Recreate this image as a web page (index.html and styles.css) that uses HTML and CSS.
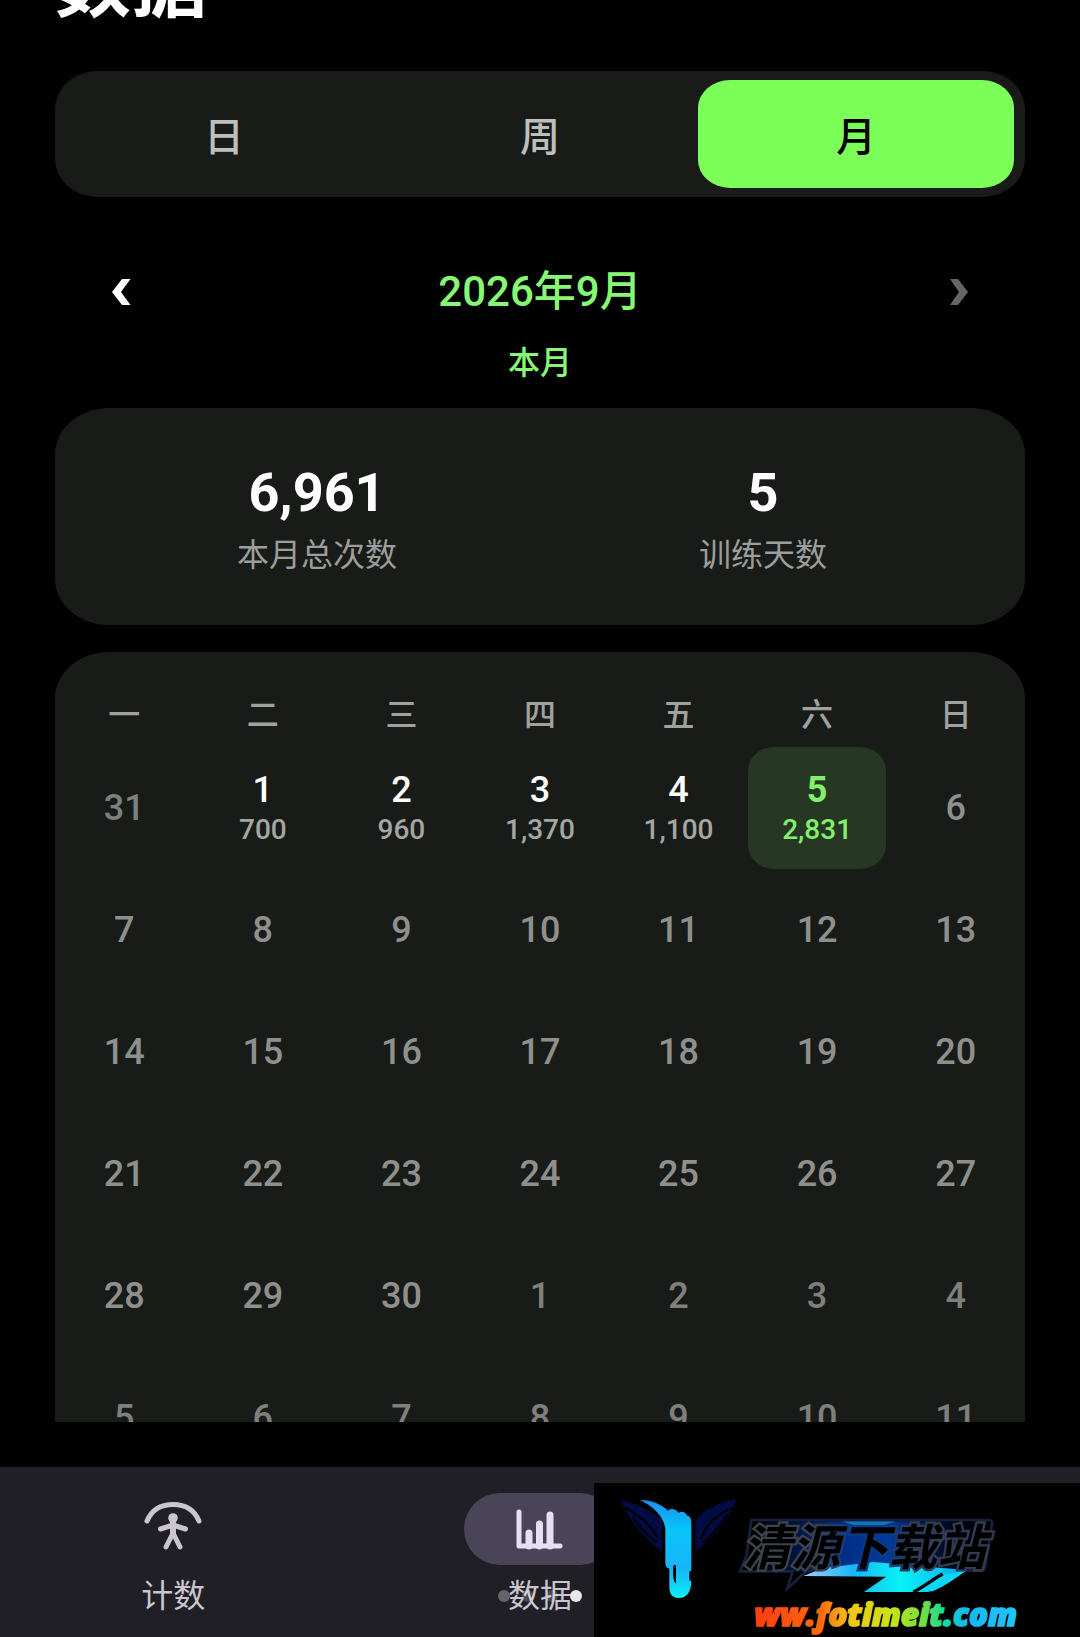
FILE: index.html
```html
<!DOCTYPE html>
<html lang="zh-CN">
<head>
  <meta charset="UTF-8" />
  <meta name="viewport" content="width=device-width, initial-scale=1.0"/>
  <title>数据</title>
  <link rel="stylesheet" href="styles.css">
</head>
<body>
  <div class="app">
    <main class="content">
      <h1>数据</h1>

      <div class="tabs">
        <button type="button">日</button>
        <button type="button">周</button>
        <button type="button" class="active">月</button>
      </div>

      <div class="month-nav">
        <button type="button" aria-label="上个月">
          <svg width="20" height="26" viewBox="0 0 20 26"><path d="M11 0h8.500L10 13l9.500 13H11L1 13z" fill="#fff"/></svg>
        </button>
        <h2>2026年9月</h2>
        <button type="button" aria-label="下个月" disabled>
          <svg width="20" height="26" viewBox="0 0 20 26"><path d="M9 0H1l9 13L1 26h8l10-13z" fill="#666"/></svg>
        </button>
      </div>
      <p class="current">本月</p>

      <section class="card stats">
        <div class="stat">
          <strong>6,961</strong>
          <span>本月总次数</span>
        </div>
        <div class="stat">
          <strong>5</strong>
          <span>训练天数</span>
        </div>
      </section>

      <section class="card calendar">
        <table>
          <thead>
            <tr><th>一</th><th>二</th><th>三</th><th>四</th><th>五</th><th>六</th><th>日</th></tr>
          </thead>
          <tbody>
            <tr>
              <td class="other">31</td>
              <td class="done"><b>1</b><small>700</small></td>
              <td class="done"><b>2</b><small>960</small></td>
              <td class="done"><b>3</b><small>1,370</small></td>
              <td class="done"><b>4</b><small>1,100</small></td>
              <td class="done today"><b>5</b><small>2,831</small></td>
              <td>6</td>
            </tr>
            <tr><td>7</td><td>8</td><td>9</td><td>10</td><td>11</td><td>12</td><td>13</td></tr>
            <tr><td>14</td><td>15</td><td>16</td><td>17</td><td>18</td><td>19</td><td>20</td></tr>
            <tr><td>21</td><td>22</td><td>23</td><td>24</td><td>25</td><td>26</td><td>27</td></tr>
            <tr><td>28</td><td>29</td><td>30</td><td class="other">1</td><td class="other">2</td><td class="other">3</td><td class="other">4</td></tr>
            <tr class="other"><td>5</td><td>6</td><td>7</td><td>8</td><td>9</td><td>10</td><td>11</td></tr>
          </tbody>
        </table>
      </section>
    </main>

    <nav class="bottom-nav">
      <a href="#count">
        <span class="icon">
          <svg width="60" height="56" viewBox="0 0 60 56" fill="none" stroke="#cac5d0" stroke-width="5" stroke-linecap="round" stroke-linejoin="round">
            <path d="M4 20C9 8 19 3.500 30 3.500S51 8 56 20"/>
            <circle cx="30" cy="17" r="4.800" fill="#cac5d0" stroke="none"/>
            <path d="M17.500 28l12.500-4 12.500 4M30 24v9M30 32l-7 14M30 32l7 14"/>
            <path d="M30 21v11" stroke-width="6"/>
          </svg>
        </span>
        <span class="label">计数</span>
      </a>
      <a href="#data" class="selected">
        <span class="icon">
          <svg width="50" height="42" viewBox="0 0 50 42" fill="none" stroke="#e8def8" stroke-linecap="round" stroke-linejoin="round">
            <path d="M4 4v34h41" stroke-width="5"/>
            <path d="M14 25v13M24.500 16v22M35 7v31" stroke-width="7"/>
          </svg>
        </span>
        <span class="label">数据
          <span class="dots"><i></i><i></i><i></i><i></i></span>
        </span>
      </a>
    </nav>

    <!-- 站点标志，浮在底部导航上方 -->
    <div class="site-logo">
      <svg viewBox="12 39 1458 462">
        <defs>
          <linearGradient id="bird" x1="0" y1="0" x2="0" y2="1">
            <stop offset="0" stop-color="#1b8ff0"/>
            <stop offset="0.300" stop-color="#08c4fb"/>
            <stop offset="0.700" stop-color="#19b4fb"/>
            <stop offset="1" stop-color="#08f0f5"/>
          </linearGradient>
          <linearGradient id="glow" x1="0" y1="0" x2="1" y2="0">
            <stop offset="0" stop-color="#001c66" stop-opacity="0"/>
            <stop offset="0.350" stop-color="#002a80"/>
            <stop offset="0.600" stop-color="#003a9c"/>
            <stop offset="1" stop-color="#000a2c" stop-opacity="0"/>
          </linearGradient>
          <linearGradient id="swoosh" x1="0" y1="0" x2="1" y2="0">
            <stop offset="0" stop-color="#9fd0ff"/>
            <stop offset="0.300" stop-color="#18b6f5"/>
            <stop offset="0.600" stop-color="#08f2f5"/>
            <stop offset="1" stop-color="#0ba4f0"/>
          </linearGradient>
          <linearGradient id="edge" gradientUnits="userSpaceOnUse" x1="450" y1="0" x2="1210" y2="0">
            <stop offset="0" stop-color="#404248"/>
            <stop offset="0.300" stop-color="#3a4152"/>
            <stop offset="0.450" stop-color="#0a3a84"/>
            <stop offset="0.550" stop-color="#0a3a84"/>
            <stop offset="0.700" stop-color="#303c58"/>
            <stop offset="1" stop-color="#343a4c"/>
          </linearGradient>
          <linearGradient id="rainbow" gradientUnits="userSpaceOnUse" x1="495" y1="0" x2="1283" y2="0">
            <stop offset="0" stop-color="#ff3c14"/>
            <stop offset="0.250" stop-color="#ff6a0c"/>
            <stop offset="0.360" stop-color="#f5c414"/>
            <stop offset="0.520" stop-color="#c8e414"/>
            <stop offset="0.640" stop-color="#70e040"/>
            <stop offset="0.720" stop-color="#12dca0"/>
            <stop offset="0.800" stop-color="#12baf0"/>
            <stop offset="1" stop-color="#20c4ff"/>
          </linearGradient>
        </defs>
        <path d="M90 90c50 10 95 30 126 62v94c-52-40-98-94-126-156z" fill="#020b42"/>
        <path d="M104 112c24 14 48 30 68 48l32 42M128 142c22 30 46 56 72 76" fill="none" stroke="#000" stroke-width="6"/>
        <path d="M440 88c-52 8-98 30-124 62v94c54-40 98-92 124-156z" fill="#020b42"/>
        <path d="M428 112c-30 14-62 36-78 60l-18 34M412 134c-22 32-46 60-72 84" fill="none" stroke="#000" stroke-width="6"/>
        <path d="M150 90c36 0 66 14 84 32 10-10 24-4 32 6 12-6 22 0 26 10 8 0 12 8 12 22v142l-6 2v28h6c0 28-10 52-38 52-20 0-28-14-28-34v-54c-8-2-12-8-12-18v-102c-6-40-36-66-76-86z" fill="url(#bird)"/>
        <path d="M250 288c5-6 8-4 8 4v48c-8-4-10-22-8-52z" fill="#000"/>
        <path d="M500 154h680l-20 150H480z" fill="url(#glow)"/>
        <path d="M756 154h160l-50 16h-60z" fill="#0a78c0"/>
        <path d="M484 150h712q12 0 10 12l-20 128q-2 12-14 12H650l-58 54 16-52H450l20-50z" fill="none" stroke="#18203c" stroke-width="8"/>
        <path d="M640 318l60-24 150-18 250 22 30 4c-40 20-80 44-116 64H822l66-46z" fill="url(#swoosh)"/>
        <path d="M984 366c34-20 66-46 86-54l56-8c-30 22-64 46-98 60z" fill="#08d8f5"/>
        <path d="M970 366c32-16 64-42 88-54" fill="none" stroke="#000" stroke-width="10"/>
        <text class="logo-name" x="458" y="284">清源下载站</text>
        <text class="logo-url" x="493" y="468">ww.fotimeit.com</text>
      </svg>
    </div>
  </div>
</body>
</html>
```
FILE: styles.css
```css
* {
  box-sizing: border-box;
}

body {
  font-family: Roboto, "Noto Sans CJK SC", sans-serif;
  background-color: #000;
  color: #fff;
  margin: 0;
}

h1,
h2,
p {
  margin: 0;
}

button {
  font-family: inherit;
  background: none;
  border: none;
  padding: 0;
  cursor: pointer;
}

.app {
  height: 100vh;
  display: flex;
  flex-direction: column;
  position: relative;
  overflow: hidden;
}

.content {
  flex: 1;
  min-height: 0;
  margin-bottom: 45px;
  padding: 0 55px;
  overflow: hidden;
}

/* 页面已滚动，标题只露出下半部分 */
h1 {
  font-size: 76px;
  line-height: 76px;
  margin-top: -53px;
  margin-bottom: 48px;
}

.tabs {
  display: flex;
  padding: 9px 11px;
  background-color: #191b19;
  border-radius: 42px / 38px;
}

.tabs button {
  flex: 1;
  height: 108px;
  border-radius: 32px / 28px;
  color: #bdbfbd;
  font-size: 40px;
  font-weight: 500;
}

.tabs .active {
  background-color: #7dff5a;
  color: #000;
}

.month-nav {
  display: flex;
  align-items: center;
  justify-content: space-between;
  height: 90px;
  margin-top: 45px;
}

.month-nav button {
  width: 132px;
  height: 90px;
}

.month-nav svg {
  display: block;
  margin: 10px auto 0;
}

h2 {
  color: #86f874;
  font-size: 42px;
  font-weight: 500;
}

.current {
  color: #86f874;
  font-size: 32px;
  line-height: 50px;
  font-weight: 500;
  text-align: center;
  margin-top: 6px;
}

.card {
  background-color: #191b19;
  border-radius: 54px / 46px;
}

.stats {
  display: flex;
  margin-top: 20px;
  padding: 53px 39px 48px;
}

.stat {
  flex: 1;
  display: flex;
  flex-direction: column;
  align-items: center;
  gap: 8px;
}

.stat strong {
  font-size: 54px;
  line-height: 64px;
}

.stat span {
  color: #9c9e9c;
  font-size: 32px;
  line-height: 44px;
}

.calendar {
  margin-top: 27px;
  padding-top: 31px;
}

table {
  width: 100%;
  table-layout: fixed;
  border-collapse: separate;
  border-spacing: 0;
}

th {
  height: 64px;
  padding: 0;
  color: #a0a2a0;
  font-size: 32px;
  line-height: 40px;
  font-weight: 500;
}

td {
  height: 122px;
  padding: 0;
  color: #8e908e;
  font-size: 36px;
  line-height: 40px;
  font-weight: 500;
  text-align: center;
}

.other,
.other td {
  color: #7e807e;
}

.done {
  padding-top: 4px;
}

td b,
td small {
  display: block;
}

td b {
  color: #fff;
  font-weight: 500;
}

td small {
  color: #a4a6a4;
  font-size: 28px;
}

.today {
  background-color: #263823;
  border-radius: 26px / 24px;
}

.today b,
.today small {
  color: #82f06c;
}

.today b {
  font-weight: bold;
}

.bottom-nav {
  display: grid;
  grid-template-columns: repeat(3, 1fr);
  column-gap: 20px;
  height: 170px;
  padding-top: 26px;
  background-color: #201f25;
}

.bottom-nav a {
  display: flex;
  flex-direction: column;
  align-items: center;
  gap: 10px;
  color: #cac5d0;
  text-decoration: none;
}

.icon {
  display: flex;
  align-items: center;
  justify-content: center;
  width: 152px;
  height: 72px;
  border-radius: 36px;
}

.selected .icon {
  background-color: #4a4458;
}

.label {
  position: relative;
  font-size: 32px;
  line-height: 42px;
}

/* 叠在标签上的页面指示点 */
.dots {
  position: absolute;
  top: 15px;
  left: -10px;
  right: -10px;
  display: flex;
  justify-content: space-between;
}

.dots i {
  width: 12px;
  height: 12px;
  border-radius: 50%;
  background-color: rgba(255, 255, 255, 0.2);
}

.dots i:first-child {
  background-color: #66636a;
}

.dots i:last-child {
  background-color: #e8e6ea;
}

.site-logo {
  position: absolute;
  right: 0;
  bottom: 0;
  width: 45%;
  background-color: #000;
}

.site-logo svg {
  display: block;
  width: 100%;
}

.logo-name {
  font-family: "Noto Sans CJK SC", sans-serif;
  font-size: 146px;
  font-weight: bold;
  font-style: italic;
  fill: #000;
  stroke: url(#edge);
  stroke-width: 14px;
  paint-order: stroke;
}

.logo-url {
  font-family: "Open Sans", sans-serif;
  font-size: 94px;
  font-weight: 800;
  font-style: italic;
  fill: url(#rainbow);
  stroke: url(#rainbow);
  stroke-width: 5px;
}
```
